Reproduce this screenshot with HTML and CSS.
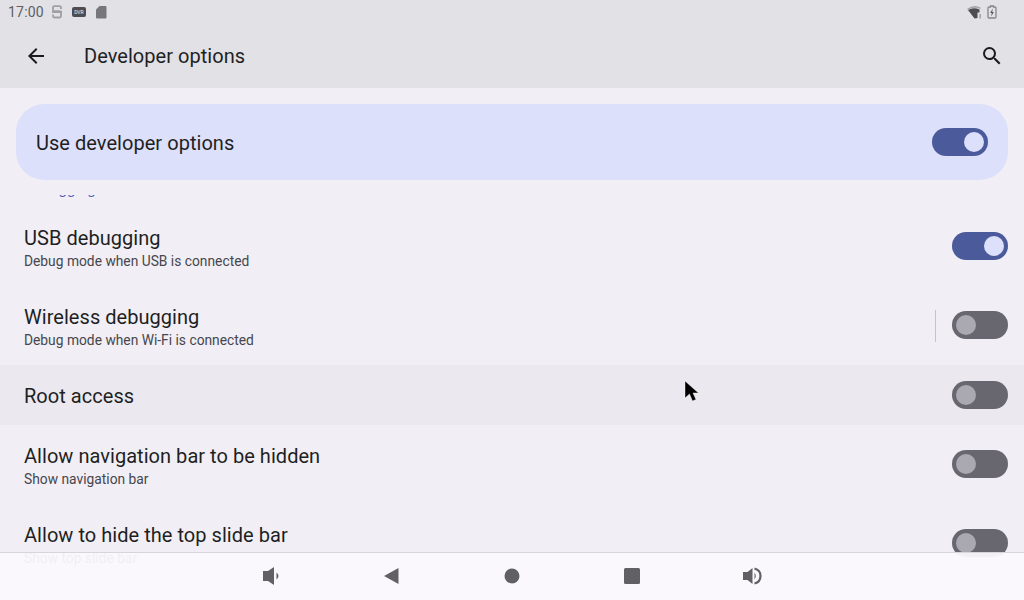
FILE: index.html
```html
<!DOCTYPE html>
<html lang="en">
  <head>
    <meta charset="UTF-8" />
    <title>Developer options</title>
    <link rel="stylesheet" href="styles.css">
  </head>
  <body>
    <div class="screen">
      <header class="topArea">
        <div class="statusBar">
          <div class="statusLeft">
            <span class="time">17:00</span>
            <svg class="statusIcon" width="12" height="14" viewBox="0 0 12 14"><path d="M10 4V2.5Q10 1.2 8.7 1.2H3.3Q2 1.2 2 2.5V5Q2 6.2 3.3 6.2H8.7Q10 6.2 10 7.5V11Q10 12.5 8.7 12.5H3.3Q2 12.5 2 11V9.5M1 7H11" fill="none" stroke="#a09fa4" stroke-width="1.8"/></svg>
            <span class="dvrBadge">DVR</span>
            <svg class="statusIcon" width="12" height="14" viewBox="0 0 12 14"><path d="M4.5 1H10.5Q11.5 1 11.5 2V12.5Q11.5 13.5 10.5 13.5H2Q1 13.5 1 12.5V4.5Z" fill="#77767b"/></svg>
          </div>
          <div class="statusRight">
            <svg width="16" height="14" viewBox="0 0 16 14"><path d="M0.5 3.5Q7 -1 13.5 2.5V4Q7 1 0.5 5Z" fill="#a5a4a9"/><path d="M1 5Q6.5 1.8 12.5 4.5V7.5L10.5 7.5V13L7.5 13.5Z" fill="#4d4c52"/><rect x="12.4" y="9" width="1.6" height="4.5" fill="#a5a4a9"/></svg>
            <svg width="10" height="14" viewBox="0 0 10 14"><path d="M3.5 1V2H2Q1 2 1 3V12Q1 13 2 13H8Q9 13 9 12V3Q9 2 8 2H6.5V1Z" fill="none" stroke="#87868b" stroke-width="1.3"/><path d="M5.8 3.5L3.2 8H4.8L4.2 11.5L6.8 7H5.2Z" fill="#55545a"/></svg>
          </div>
        </div>
        <div class="appBar">
          <svg class="backIcon" width="24" height="24" viewBox="0 0 24 24"><path d="M20 11H7.83l5.59-5.59L12 4l-8 8 8 8 1.41-1.41L7.83 13H20z" fill="#1b1b1f"/></svg>
          <h1 class="pageTitle">Developer options</h1>
          <svg class="searchIcon" width="24" height="24" viewBox="0 0 24 24"><path d="M15.5 14h-.79l-.28-.27A6.47 6.47 0 0 0 16 9.5 6.5 6.5 0 1 0 9.5 16c1.61 0 3.09-.59 4.23-1.57l.27.28v.79l5 4.99L20.49 19l-4.99-5zm-6 0C7.01 14 5 11.99 5 9.5S7.01 5 9.5 5 14 7.01 14 9.5 11.99 14 9.5 14z" fill="#1b1b1f"/></svg>
        </div>
      </header>

      <div class="mainSwitch">
        <span class="mainSwitchLabel">Use developer options</span>
        <span class="toggle on"></span>
      </div>

      <div class="settingsList">
        <div class="sectionTitle">Debugging</div>

        <div class="row">
          <div class="rowText">
            <div class="rowTitle">USB debugging</div>
            <div class="rowSub">Debug mode when USB is connected</div>
          </div>
          <span class="toggle on"></span>
        </div>

        <div class="row">
          <div class="rowText">
            <div class="rowTitle">Wireless debugging</div>
            <div class="rowSub">Debug mode when Wi-Fi is connected</div>
          </div>
          <span class="rowDivider"></span>
          <span class="toggle"></span>
        </div>

        <div class="row single hovered">
          <div class="rowText">
            <div class="rowTitle">Root access</div>
          </div>
          <span class="toggle"></span>
        </div>

        <div class="row">
          <div class="rowText">
            <div class="rowTitle">Allow navigation bar to be hidden</div>
            <div class="rowSub">Show navigation bar</div>
          </div>
          <span class="toggle"></span>
        </div>

        <div class="row">
          <div class="rowText">
            <div class="rowTitle">Allow to hide the top slide bar</div>
            <div class="rowSub">Show top slide bar</div>
          </div>
          <span class="toggle"></span>
        </div>
      </div>

      <nav class="navBar">
        <svg width="24" height="24" viewBox="0 0 24 24"><path d="M3 7H8L14 3V21L8 17H3Z" fill="#606065"/><path d="M16.5 8.5Q20.5 12 16.5 15.5Z" fill="#606065"/></svg>
        <svg width="24" height="24" viewBox="0 0 24 24"><path d="M4 12L18.5 4V20Z" fill="#606065"/></svg>
        <svg width="24" height="24" viewBox="0 0 24 24"><circle cx="12" cy="12" r="7.5" fill="#606065"/></svg>
        <svg width="24" height="24" viewBox="0 0 24 24"><rect x="4" y="4" width="16" height="16" rx="1.5" fill="#606065"/></svg>
        <svg width="24" height="24" viewBox="0 0 24 24"><path d="M3 8H7.5L12.5 4V20L7.5 16H3Z" fill="#606065"/><path d="M14.5 8.5Q17 12 14.5 15.5Z" fill="#606065"/><path d="M14.5 4.5Q20.5 6 20.5 12T14.5 19.5" fill="none" stroke="#606065" stroke-width="2.2"/></svg>
      </nav>

      <svg class="cursor" width="16" height="24" viewBox="0 0 16 24"><path d="M1 1V18L5.5 14L8.5 21L12 19.5L9 13H14.5Z" fill="#000" stroke="#fff" stroke-width="0.8" stroke-opacity="0.5"/></svg>
    </div>
  </body>
</html>
```

FILE: styles.css
```css
:root {
  --main-font: "Roboto";
  --top-color: #e2e1e6;
  --page-color: #f1eff5;
  --accent-color: #4b5a9a;
  --text-color: #1f1f23;
  --sub-color: #47464c;
}

* {
  margin: 0;
  box-sizing: border-box;
  font-family: var(--main-font), sans-serif;
}

body {
  width: 1024px;
  height: 600px;
  overflow: hidden;
  background: var(--page-color);
}

.screen {
  position: relative;
  width: 1024px;
  height: 600px;
  display: flex;
  flex-direction: column;
  overflow: hidden;
}

.topArea {
  height: 88px;
  flex-shrink: 0;
  background: var(--top-color);
}

.statusBar {
  height: 24px;
  padding: 0 27px 0 8px;
  display: flex;
  justify-content: space-between;
  align-items: center;
}

.statusLeft,
.statusRight {
  display: flex;
  align-items: center;
}

.statusRight {
  gap: 4px;
}

.time {
  font-size: 14px;
  color: #5f5e63;
  letter-spacing: 0.2px;
  margin-right: 7px;
}

.dvrBadge {
  width: 14px;
  height: 10px;
  margin: 0 9px 0 9px;
  background: #4d4c51;
  border-radius: 2px;
  color: #f0f0f0;
  font-size: 5px;
  line-height: 10px;
  text-align: center;
}

.appBar {
  height: 64px;
  padding: 0 20px 0 24px;
  display: flex;
  align-items: center;
}

.backIcon {
  margin-right: 36px;
}

.pageTitle {
  flex: 1;
  font-size: 20px;
  font-weight: 400;
  color: var(--text-color);
  letter-spacing: 0.04px;
}

.mainSwitch {
  height: 76px;
  flex-shrink: 0;
  margin: 16px 16px 0;
  padding: 0 20px;
  background: #dde0fb;
  border-radius: 28px;
  display: flex;
  justify-content: space-between;
  align-items: center;
}

.mainSwitchLabel {
  margin-top: 2px;
  font-size: 20px;
  color: var(--text-color);
  letter-spacing: 0.04px;
}

.toggle {
  display: flex;
  align-items: center;
  width: 56px;
  height: 28px;
  flex-shrink: 0;
  padding: 0 4px;
  border-radius: 14px;
  background: #68666f;
}

.toggle::after {
  content: "";
  width: 20px;
  height: 20px;
  border-radius: 50%;
  background: #aaa8b1;
}

.toggle.on {
  justify-content: flex-end;
  background: var(--accent-color);
}

.toggle.on::after {
  background: #dde0fb;
}

.settingsList {
  flex: 1;
  margin-top: 15px;
  overflow: hidden;
}

/* only the descenders show under the pinned card */
.sectionTitle {
  height: 20px;
  margin-top: -16px;
  margin-bottom: 8px;
  padding-left: 24px;
  font-size: 15px;
  line-height: 20px;
  color: #4f5cb8;
}

.row {
  height: 79px;
  padding: 0 16px 0 24px;
  display: flex;
  align-items: center;
}

.row .toggle {
  margin-bottom: 1px;
}

.row.single {
  height: 60px;
}

.row.single .rowText {
  padding-top: 1px;
}

.hovered {
  background: #ebe9ef;
}

.rowText {
  flex: 1;
  padding-top: 3px;
}

.rowTitle {
  font-size: 20px;
  line-height: 26px;
  color: var(--text-color);
  letter-spacing: 0.04px;
}

.rowSub {
  font-size: 13.8px;
  line-height: 20px;
  color: var(--sub-color);
}

.rowDivider {
  width: 1px;
  height: 32px;
  margin-right: 16px;
  background: #c4c3c9;
}

.navBar {
  position: absolute;
  left: 0;
  right: 0;
  bottom: 0;
  height: 48px;
  padding-bottom: 1px;
  border-top: 1px solid #d6d5da;
  background: rgba(250, 248, 252, 0.95);
  display: flex;
  justify-content: center;
  align-items: center;
  gap: 96px;
}

.cursor {
  position: absolute;
  left: 684px;
  top: 380px;
}
```
